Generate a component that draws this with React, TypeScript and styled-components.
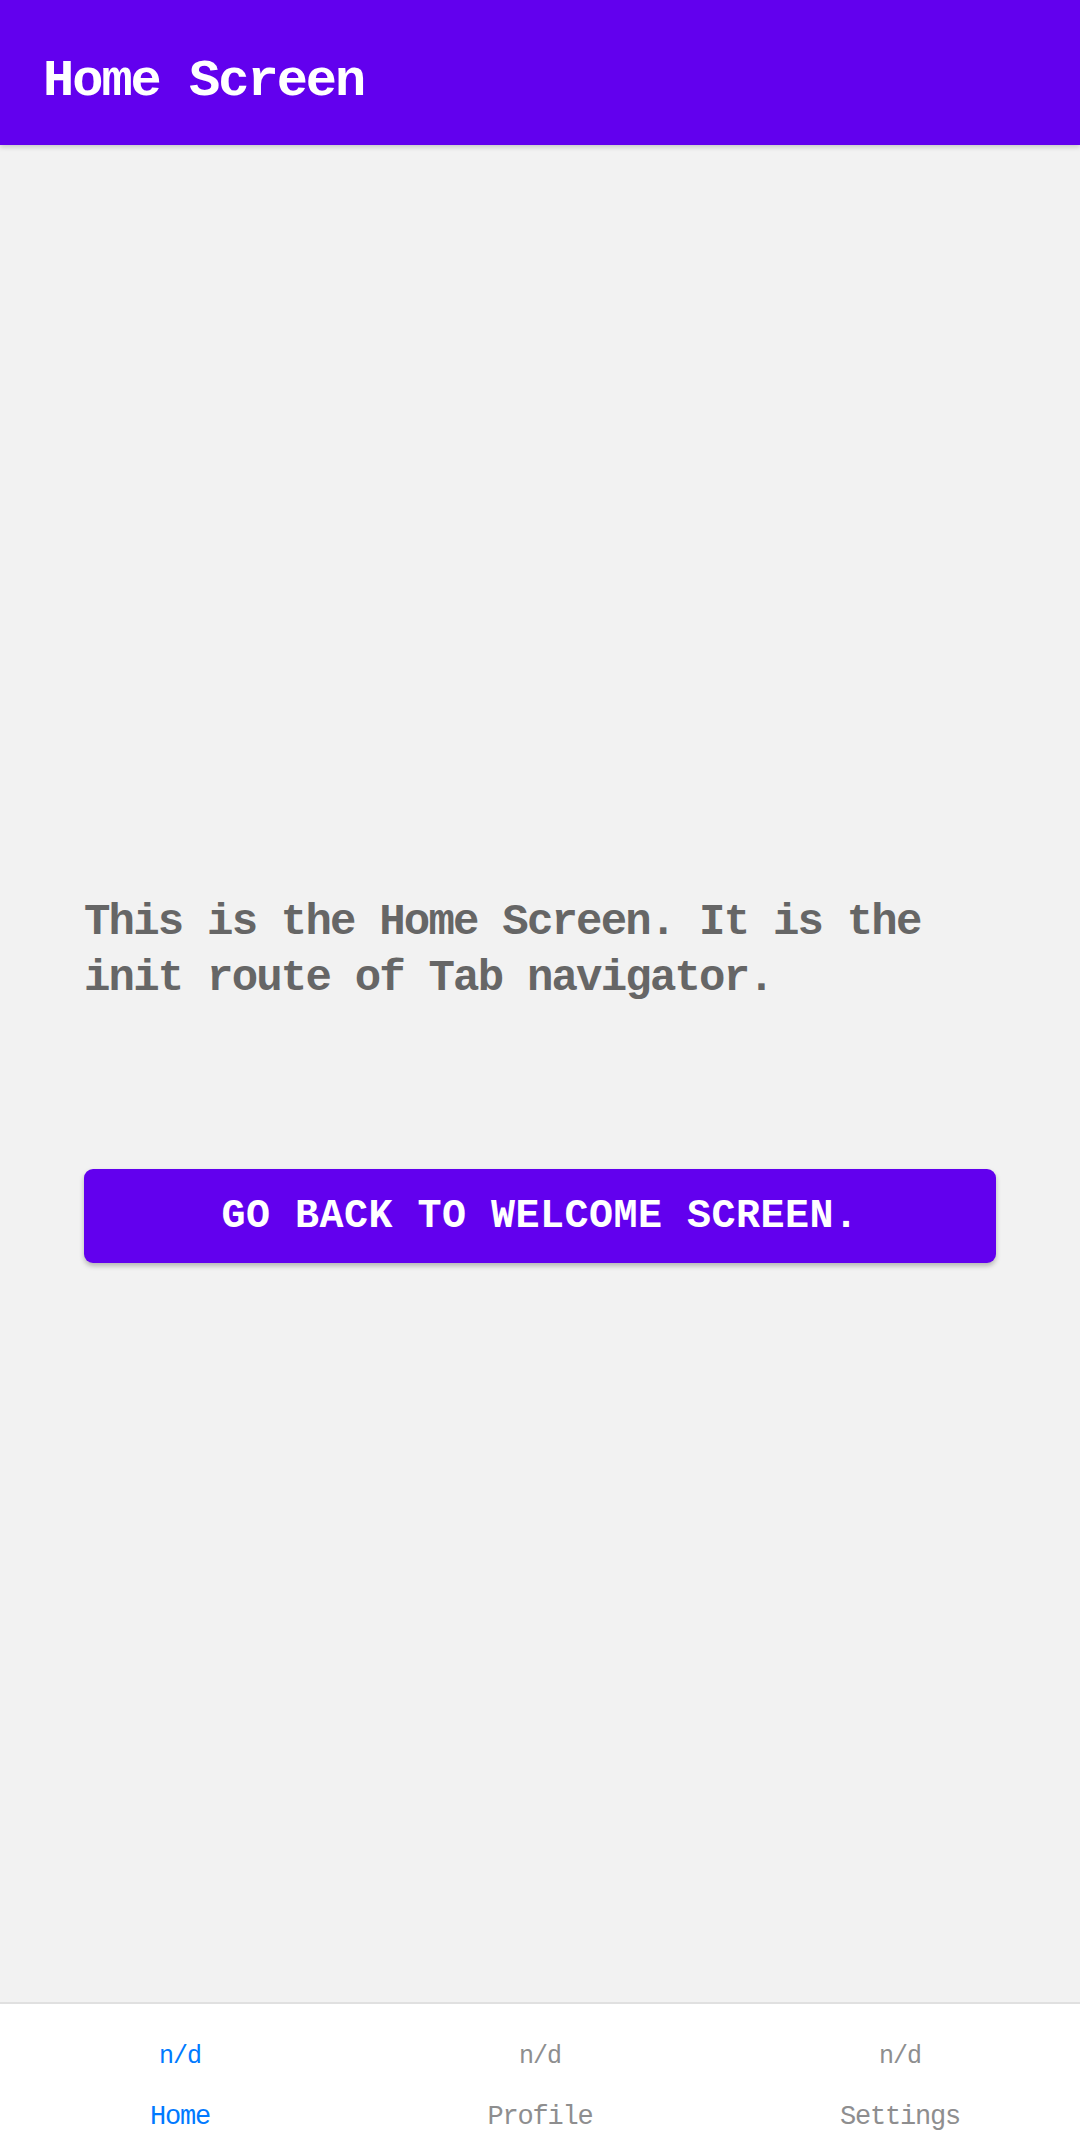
import styled, { createGlobalStyle } from 'styled-components';
import { FC } from 'react';

const GlobalStyle = createGlobalStyle`
  html, body {
    margin: 0;
    padding: 0;
    background: #f2f2f2;
  }
  * {
    box-sizing: border-box;
  }
`;

const Screen = styled.div`
  display: flex;
  flex-direction: column;
  height: 2131px;
  font-family: 'Liberation Mono', 'Courier New', monospace;
  background: #f2f2f2;
`;

const Header = styled.header`
  display: flex;
  align-items: center;
  height: 145px;
  padding: 17px 0 0 43px;
  background: #6200ee;
  box-shadow: 0 2px 5px rgba(0, 0, 0, 0.18);
  position: relative;
  z-index: 1;
`;

const Title = styled.h1`
  margin: 0;
  font-size: 52px;
  font-weight: bold;
  letter-spacing: -2px;
  color: #fff;
`;

const Main = styled.main`
  flex: 1;
  display: flex;
  flex-direction: column;
  justify-content: center;
  padding: 10px 84px 0;
`;

const Message = styled.p`
  margin: 0 0 163px;
  font-size: 44px;
  line-height: 56px;
  letter-spacing: -1.8px;
  color: #666;
  font-weight: bold;
`;

const Button = styled.button`
  height: 94px;
  width: 100%;
  border: none;
  border-radius: 9px;
  background: #6200ee;
  color: #fff;
  font-family: inherit;
  font-size: 40px;
  font-weight: bold;
  letter-spacing: 0.5px;
  text-transform: uppercase;
  box-shadow: 0 3px 5px rgba(0, 0, 0, 0.25);
  cursor: pointer;
`;

const TabBar = styled.nav`
  display: grid;
  grid-template-columns: repeat(3, 1fr);
  height: 129px;
  background: #fff;
  border-top: 2px solid #e0e0e0;
`;

const Tab = styled.div<{ $active?: boolean }>`
  display: flex;
  flex-direction: column;
  align-items: center;
  padding-top: 38px;
  color: ${(p) => (p.$active ? '#007aff' : '#8e8e8f')};
`;

const TabIcon = styled.span`
  font-size: 25px;
  line-height: 30px;
  letter-spacing: -1px;
`;

const TabLabel = styled.span`
  margin-top: 30px;
  font-size: 27px;
  line-height: 30px;
  letter-spacing: -1.2px;
`;

const tabs = ['Home', 'Profile', 'Settings'];

const App: FC = () => {
  return (
    <>
      <GlobalStyle />
      <Screen>
        <Header>
          <Title>Home Screen</Title>
        </Header>
        <Main>
          <Message>
            This is the Home Screen. It is the init route of Tab navigator.
          </Message>
          <Button>Go back to Welcome Screen.</Button>
        </Main>
        <TabBar>
          {tabs.map((name, i) => (
            <Tab key={name} $active={i === 0}>
              <TabIcon>n/d</TabIcon>
              <TabLabel>{name}</TabLabel>
            </Tab>
          ))}
        </TabBar>
      </Screen>
    </>
  );
};

export default App;
